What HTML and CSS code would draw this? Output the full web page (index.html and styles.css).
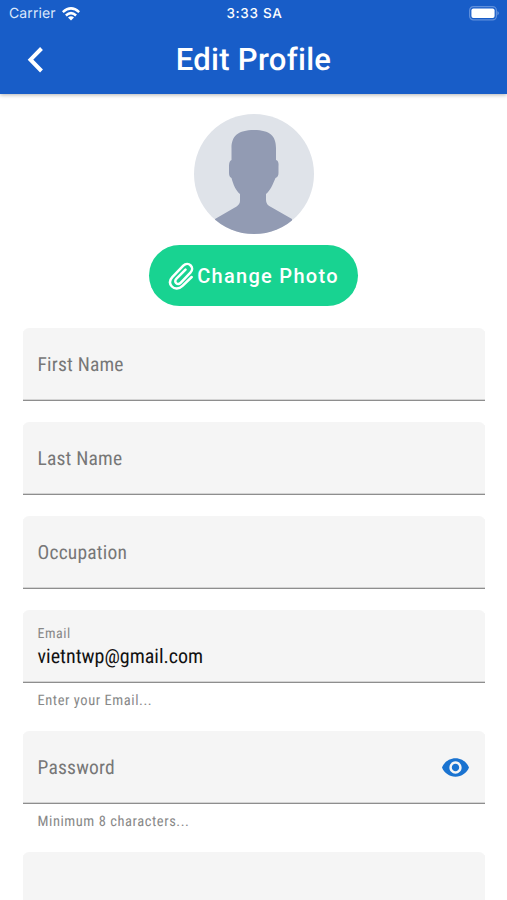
FILE: index.html
```html
<!DOCTYPE html>
<html lang="en">
<head>
<meta charset="utf-8">
<title>Edit Profile</title>
<link rel="stylesheet" href="styles.css">
</head>
<body>
<header class="header">
  <div class="status">
    <div class="carrier"><span>Carrier</span>
      <svg class="wifi" viewBox="0 0 18 14" fill="none" stroke="#fff" stroke-width="2.5"><path d="M.8 5.100Q9-2.300 17.200 5.100M3.900 8.500Q9 3.700 14.100 8.500"/><path d="M9 13.600L6 10.600Q9 7.900 12 10.600Z" fill="#fff" stroke="none"/></svg>
    </div>
    <div class="time">3:33 SA</div>
    <svg class="battery" viewBox="0 0 31 15"><rect x=".6" y=".6" width="26.800" height="13.300" rx="3.800" fill="none" stroke="#5f8fdb" stroke-width="1.200"/><rect x="2.400" y="2.400" width="23.200" height="9.700" rx="2" fill="#fff"/><path d="M28.500 5Q31 7.200 28.500 9.500Z" fill="#769fe0"/></svg>
  </div>
  <div class="nav">
    <svg class="back" viewBox="0 0 16 26" fill="none" stroke="#fff" stroke-width="4"><path d="M14.500 1.500L3.500 12.700L14.500 24"/></svg>
    <h1 class="title">Edit Profile</h1>
  </div>
</header>
<main class="content">
  <svg class="avatar" viewBox="0 0 120 120">
    <defs><clipPath id="disc"><circle cx="60" cy="60" r="60"/></clipPath></defs>
    <g clip-path="url(#disc)"><path d="M0 0H120V120H0Z" fill="#dfe3e9"/><path fill="#929bb3" d="M37.500 34C37.500 22 44 16 60 16S82 22 82 34V46Q85 47 84.500 52V59Q84.500 63 81.500 64C79 70 76 77 72 80V86Q72 91 77 93L98 105V120H21V105L40 94Q46 91 46 87V80C42 77 39 70 37.500 64Q35 63 35 59V52Q35 47 37.500 46Z"/></g>
  </svg>
  <button class="change" type="button">
    <svg class="clip" viewBox="0 0 26 28" fill="none" stroke="#fff" stroke-width="2.500" stroke-linecap="round" stroke-linejoin="round"><path d="M23.700 15L14.500 23.800C11 27.200 6.500 27.200 3.900 24.500S1.500 18.300 4.300 15.200L15.300 3.700C17.500 1.500 20.800 1.600 22.700 3.500S24.600 8.400 22.400 10.700L12.600 20.800C11.200 22.200 9.300 22.200 8.100 21.100S7 18.200 8.500 16.700L17.500 7.600"/></svg>
    <span>Change Photo</span>
  </button>
  <form class="form">
    <div class="field"><span class="label">First Name</span></div>
    <div class="field"><span class="label">Last Name</span></div>
    <div class="field"><span class="label">Occupation</span></div>
    <div class="group">
      <div class="field filled"><span class="small">Email</span><span class="value">vietntwp@gmail.com</span></div>
      <p class="help">Enter your Email...</p>
    </div>
    <div class="group">
      <div class="field"><span class="label">Password</span>
        <svg class="eye" viewBox="1 4.500 22 15"><path fill="#1a73d0" d="M12 4.500C7 4.500 2.730 7.610 1 12c1.730 4.390 6 7.500 11 7.500s9.270-3.110 11-7.500c-1.730-4.390-6-7.500-11-7.500zM12 17c-2.760 0-5-2.240-5-5s2.240-5 5-5 5 2.240 5 5-2.240 5-5 5zm0-8c-1.660 0-3 1.340-3 3s1.340 3 3 3 3-1.340 3-3-1.340-3-3-3z"/></svg>
      </div>
      <p class="help">Minimum 8 characters...</p>
    </div>
    <div class="field"></div>
  </form>
</main>
</body>
</html>
```
FILE: styles.css
```css
* { box-sizing: border-box; }
html, body { height: 900px; overflow: hidden; }
body { margin: 0; background: #fff; font-family: Roboto, sans-serif; text-rendering: geometricPrecision; }
.header { height: 94px; background: #185dc8; color: #fff; box-shadow: 0 1px 4px rgba(0,0,0,.3); }
.status { height: 28px; display: grid; grid-template-columns: 1fr auto 1fr; align-items: center; padding: 0 7px 1px 9px; font-family: Inter, sans-serif; }
.carrier { display: flex; align-items: center; gap: 6px; font-size: 14px; letter-spacing: .1px; color: #dce8fb; }
.wifi { width: 18px; height: 14px; }
.time { font-size: 13.5px; font-weight: 500; letter-spacing: .7px; }
.battery { width: 31px; height: 15px; justify-self: end; }
.nav { height: 64px; display: grid; grid-template-columns: 60px 1fr 60px; align-items: center; }
.back { width: 16px; height: 26px; margin-left: 27px; }
.title { margin: 0; text-align: center; font-size: 31px; line-height: 36px; font-weight: 500; letter-spacing: .3px; }
.content { display: flex; flex-direction: column; align-items: center; padding-top: 20px; }
.avatar { width: 120px; height: 120px; flex: none; }
.change { margin: 11px 0 0; width: 209px; height: 61px; flex: none; border: 0; border-radius: 31px; background: #18d391; color: #fff; font: 500 20px/24px Roboto, sans-serif; letter-spacing: 1.3px; display: flex; align-items: center; justify-content: center; gap: 3px; padding: 0; }
.clip { width: 26px; height: 28px; }
.form { width: 462px; margin-top: 22px; display: flex; flex-direction: column; gap: 21px; font-family: "Roboto Condensed", Roboto, sans-serif; font-stretch: 75%; }
.field { height: 73px; flex: none; display: flex; align-items: center; justify-content: space-between; padding: 1px 16px 0 15px; background: #f5f5f5; border-bottom: 1px solid #8e8e8e; box-shadow: inset 0 -1px #d4d4d4; border-radius: 6px 6px 0 0; }
.label { font-size: 19.5px; line-height: 24px; letter-spacing: .2px; color: #777; }
.filled { flex-direction: column; align-items: flex-start; justify-content: center; padding-top: 3px; }
.small { font-size: 14px; line-height: 18px; letter-spacing: .5px; color: #888; }
.value { font-size: 20px; line-height: 27px; letter-spacing: 0; color: #111; }
.help { margin: 9px 15px 0; height: 18px; font-size: 14.5px; line-height: 18px; letter-spacing: .55px; color: #888; }
.eye { width: 27px; height: 19px; }
```
